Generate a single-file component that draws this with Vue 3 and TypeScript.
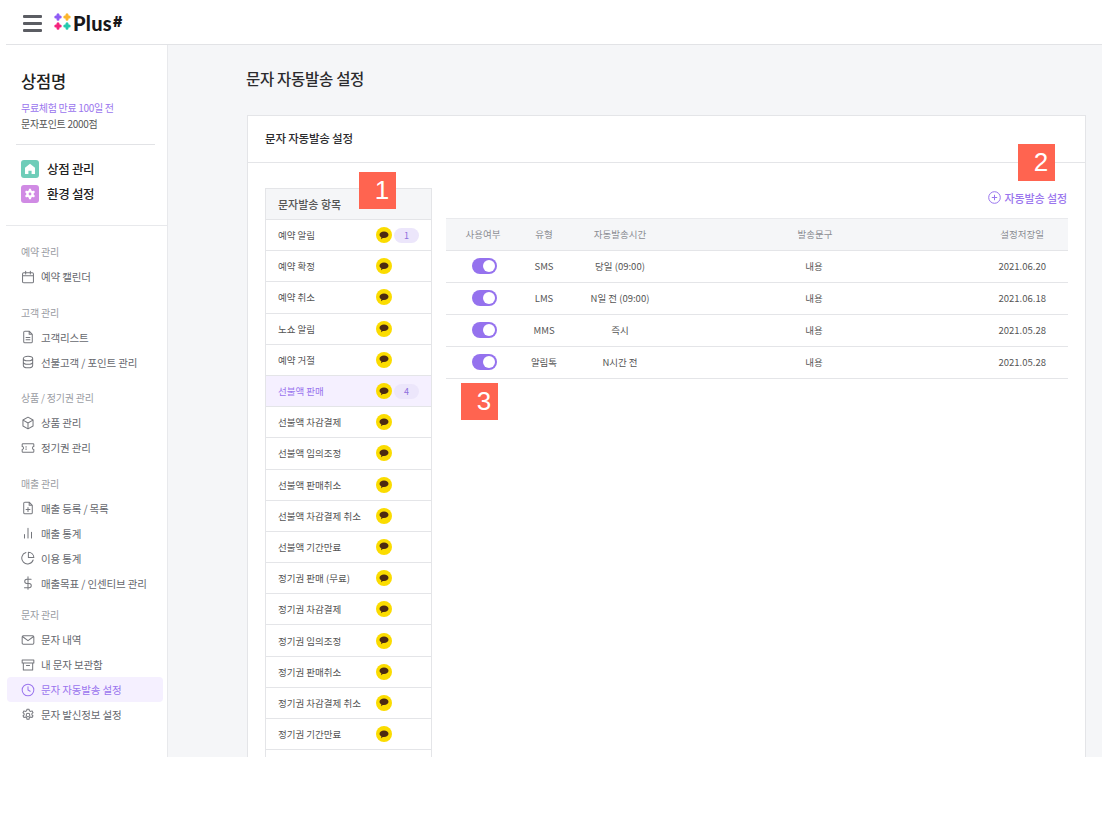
<script setup lang="ts">
interface NavItem { label: string; icon: string; active?: boolean }
interface NavGroup { title: string; items: NavItem[] }

const groups: NavGroup[] = [
  { title: '예약 관리', items: [{ label: '예약 캘린더', icon: 'calendar' }] },
  { title: '고객 관리', items: [{ label: '고객리스트', icon: 'file' }, { label: '선불고객 / 포인트 관리', icon: 'db' }] },
  { title: '상품 / 정기권 관리', items: [{ label: '상품 관리', icon: 'box' }, { label: '정기권 관리', icon: 'ticket' }] },
  { title: '매출 관리', items: [{ label: '매출 등록 / 목록', icon: 'fileplus' }, { label: '매출 통계', icon: 'bars' }, { label: '이용 통계', icon: 'pie' }, { label: '매출목표 / 인센티브 관리', icon: 'dollar' }] },
  { title: '문자 관리', items: [{ label: '문자 내역', icon: 'mail' }, { label: '내 문자 보관함', icon: 'archive' }, { label: '문자 자동발송 설정', icon: 'clock', active: true }, { label: '문자 발신정보 설정', icon: 'gear' }] },
]

const iconPaths: Record<string, string> = {
  calendar: 'M3.5 3.5h11a1.5 1.5 0 0 1 1.5 1.5v10a1.5 1.5 0 0 1-1.5 1.5h-11A1.5 1.5 0 0 1 2 15V5a1.5 1.5 0 0 1 1.5-1.5zM6 1.5v3.5M12 1.5v3.5M2 7.5h14',
  file: 'M10.5 1.5H5A1.5 1.5 0 0 0 3.5 3v12A1.5 1.5 0 0 0 5 16.5h8a1.5 1.5 0 0 0 1.5-1.5V5.5zM10.5 1.5v4h4M6.5 9.5h5M6.5 12.5h5',
  db: 'M3 4.5c0-1.6 2.7-3 6-3s6 1.4 6 3-2.7 3-6 3-6-1.4-6-3zM3 4.5v9c0 1.6 2.7 3 6 3s6-1.4 6-3v-9M3 9c0 1.6 2.7 3 6 3s6-1.4 6-3',
  box: 'M9 1.5l6.5 3.7v7.6L9 16.5l-6.5-3.7V5.2zM2.7 5.3L9 9l6.3-3.7M9 9v7.4',
  ticket: 'M2.5 3.5h13a1 1 0 0 1 1 1v2.7a1.8 1.8 0 0 0 0 3.6v2.7a1 1 0 0 1-1 1h-13a1 1 0 0 1-1-1v-2.7a1.8 1.8 0 0 0 0-3.6V4.5a1 1 0 0 1 1-1zM6.5 7v1M6.5 10v1',
  fileplus: 'M10.5 1.5H5A1.5 1.5 0 0 0 3.5 3v12A1.5 1.5 0 0 0 5 16.5h8a1.5 1.5 0 0 0 1.5-1.5V5.5zM10.5 1.5v4h4M9 8.5v5M6.5 11h5',
  bars: 'M4.5 15.5V11M9 15.5V3M13.5 15.5V8',
  pie: 'M15.6 11.6A7.5 7.5 0 1 1 6.4 2M9.5 1.5a7 7 0 0 1 7 7h-7z',
  dollar: 'M9 1v16M13 4.2H7.5a2.7 2.7 0 0 0 0 5.4h3a2.7 2.7 0 0 1 0 5.4H4.5',
  mail: 'M3 3.5h12A1.5 1.5 0 0 1 16.5 5v8a1.5 1.5 0 0 1-1.5 1.5H3A1.5 1.5 0 0 1 1.5 13V5A1.5 1.5 0 0 1 3 3.5zM1.8 4.5L9 9.8l7.2-5.3',
  archive: 'M1.5 2.5h15v4h-15zM3 6.5v9h12v-9M7 9.5h4',
  clock: 'M9 1.5a7.5 7.5 0 1 1 0 15 7.5 7.5 0 0 1 0-15zM9 4.8V9l2.8 1.6',
  gear: 'M9 6.7a2.3 2.3 0 1 1 0 4.6 2.3 2.3 0 0 1 0-4.6zM7.7 1.5h2.6l.4 2 1.6.9 1.9-.7 1.3 2.3-1.5 1.3v1.4l1.5 1.3-1.3 2.3-1.9-.7-1.6.9-.4 2H7.7l-.4-2-1.6-.9-1.9.7-1.3-2.3 1.5-1.3V7.3L2.5 6l1.3-2.3 1.9.7 1.6-.9z',
}

const categories: { label: string; count?: number; active?: boolean }[] = [
  { label: '예약 알림', count: 1 },
  { label: '예약 확정' },
  { label: '예약 취소' },
  { label: '노쇼 알림' },
  { label: '예약 거절' },
  { label: '선불액 판매', count: 4, active: true },
  { label: '선불액 차감결제' },
  { label: '선불액 임의조정' },
  { label: '선불액 판매취소' },
  { label: '선불액 차감결제 취소' },
  { label: '선불액 기간만료' },
  { label: '정기권 판매 (무료)' },
  { label: '정기권 차감결제' },
  { label: '정기권 임의조정' },
  { label: '정기권 판매취소' },
  { label: '정기권 차감결제 취소' },
  { label: '정기권 기간만료' },
  { label: '' },
]

const rows = [
  { type: 'SMS', time: '당일 (09:00)', text: '내용', date: '2021.06.20' },
  { type: 'LMS', time: 'N일 전 (09:00)', text: '내용', date: '2021.06.18' },
  { type: 'MMS', time: '즉시', text: '내용', date: '2021.05.28' },
  { type: '알림톡', time: 'N시간 전', text: '내용', date: '2021.05.28' },
]
</script>

<template>
  <div class="page">
    <header class="topbar">
      <div class="burger"><span></span><span></span><span></span></div>
      <div class="logo">
        <svg width="17" height="18" viewBox="0 0 17 18">
          <g fill="none" stroke-width="3" stroke-linecap="round">
            <path d="M4 1.8v4.4M1.8 4h4.4" stroke="#8f5cf5" />
            <path d="M13 1.8v4.4M10.8 4h4.4" stroke="#fbb62d" />
            <path d="M4 10.8v4.4M1.8 13h4.4" stroke="#f5247e" />
            <path d="M13 10.8v4.4M10.8 13h4.4" stroke="#27c9ae" />
          </g>
        </svg>
        <span class="logo-text">Plus<span class="logo-hash">#</span></span>
      </div>
    </header>

    <div class="body">
      <aside class="sidebar">
        <div class="store">
          <h2 class="store-name">상점명</h2>
          <p class="trial">무료체험 만료 100일 전</p>
          <p class="points">문자포인트 2000점</p>
          <div class="store-links">
            <div class="store-link">
              <span class="tile tile-green">
                <svg width="12" height="12" viewBox="0 0 12 12"><path d="M6 .8L11 4.8V11H7.6V7.8H4.4V11H1V4.8z" fill="#fff" /></svg>
              </span>
              상점 관리
            </div>
            <div class="store-link">
              <span class="tile tile-purple">
                <svg width="12" height="12" viewBox="0 0 12 12"><circle cx="6" cy="6" r="3.8" fill="#fff" /><path d="M6 .8v10.4M1.5 3.4l9 5.2M1.5 8.6l9-5.2" stroke="#fff" stroke-width="2.2" /><circle cx="6" cy="6" r="1.4" fill="#d08be4" /></svg>
              </span>
              환경 설정
            </div>
          </div>
        </div>
        <nav class="nav">
          <section v-for="g in groups" :key="g.title" class="group">
            <div class="group-title">{{ g.title }}</div>
            <div v-for="it in g.items" :key="it.label" class="nav-item" :class="{ active: it.active }">
              <svg class="nav-icon" width="14" height="14" viewBox="0 0 18 18"><path :d="iconPaths[it.icon]" fill="none" stroke="currentColor" stroke-width="1.3" stroke-linecap="round" stroke-linejoin="round" /></svg>
              <span>{{ it.label }}</span>
            </div>
          </section>
        </nav>
      </aside>

      <main class="main">
        <h1 class="page-title">문자 자동발송 설정</h1>
        <div class="card">
          <div class="card-head">문자 자동발송 설정</div>
          <div class="card-body">
            <div class="cat-list">
              <div class="cat-head">문자발송 항목</div>
              <div v-for="(c, i) in categories" :key="i" class="cat-row" :class="{ active: c.active }">
                <span class="cat-label">{{ c.label }}</span>
                <span v-if="c.label" class="kakao">
                  <svg width="10" height="9" viewBox="0 0 10 9"><path d="M5 .6c2.5 0 4.500 1.400 4.500 3.200S7.500 7 5 7c-.4 0-.8 0-1.200-.1L2 8.300l.4-1.900C1.200 5.800.5 4.900.5 3.800.5 2 2.500.6 5 .6z" fill="#4b2a12" /></svg>
                </span>
                <span v-if="c.count" class="count">{{ c.count }}</span>
              </div>
            </div>

            <div class="right">
              <div class="add"><svg width="13" height="13" viewBox="0 0 13 13"><circle cx="6.5" cy="6.5" r="5.8" fill="none" stroke="currentColor" stroke-width="1" /><path d="M6.5 3.800v5.400M3.800 6.500h5.400" stroke="currentColor" stroke-width="1" /></svg>자동발송 설정</div>
              <table class="tbl">
                <colgroup>
                  <col class="c1" /><col class="c2" /><col class="c3" /><col class="c4" /><col class="c5" />
                </colgroup>
                <thead>
                  <tr><th>사용여부</th><th>유형</th><th>자동발송시간</th><th>발송문구</th><th class="date">설정저장일</th></tr>
                </thead>
                <tbody>
                  <tr v-for="(r, i) in rows" :key="i">
                    <td><span class="toggle"><span class="knob"></span></span></td>
                    <td>{{ r.type }}</td>
                    <td>{{ r.time }}</td>
                    <td class="msg">{{ r.text }}</td>
                    <td class="date">{{ r.date }}</td>
                  </tr>
                </tbody>
              </table>
            </div>
          </div>
        </div>
      </main>
    </div>

    <div class="mark m1">1</div>
    <div class="mark m2">2</div>
    <div class="mark m3">3</div>
  </div>
</template>

<style>
html, body { margin: 0; background: #fff; }
</style>

<style scoped>
* { box-sizing: border-box; }
.page {
  position: relative;
  width: 1102px;
  height: 757px;
  overflow: hidden;
  background: #fff;
  font-family: "Noto Sans CJK KR", "Noto Sans", sans-serif;
  color: #333;
}
.topbar {
  height: 45px;
  margin-left: 6px;
  padding-left: 17px;
  display: flex;
  align-items: center;
  gap: 12px;
  border-bottom: 1px solid #e2e3e6;
}
.burger { width: 19px; display: flex; flex-direction: column; gap: 4px; margin-top: 2px; }
.burger span { display: block; height: 3px; border-radius: 1px; background: #5b5d63; }
.logo { display: flex; align-items: center; gap: 2px; }
.logo-text { font-family: Lato, sans-serif; font-weight: 900; font-size: 20px; line-height: 20px; color: #17171a; letter-spacing: .3px; }
.logo-hash { font-family: Inter, sans-serif; font-weight: 900; font-size: 14px; vertical-align: 4px; margin-left: 1px; }

.body { display: flex; height: 712px; }
.sidebar { width: 162px; margin-left: 6px; border-right: 1px solid #e8e9ec; flex: none; }
.store { height: 181px; border-bottom: 1px solid #e8e9ec; padding: 24px 13px 0 15px; margin-right: -1px; }
.store-name { margin: 0; font-size: 16.5px; line-height: 24px; font-weight: 500; color: #222; letter-spacing: -.2px; }
.trial { margin: 7px 0 0; font-size: 10px; line-height: 16px; color: #9a75ee; letter-spacing: -.3px; }
.points { margin: 0; font-size: 10px; line-height: 16px; color: #555; letter-spacing: -.3px; }
.store-links { margin: 12px 0 0 -5px; border-top: 1px solid #e2e3e6; padding: 15px 0 0 5px; display: flex; flex-direction: column; gap: 7px; }
.store-link { display: flex; align-items: center; gap: 8px; font-size: 12.5px; line-height: 18px; font-weight: 500; color: #222; letter-spacing: -.3px; }
.tile { width: 18px; height: 18px; border-radius: 3px; display: flex; align-items: center; justify-content: center; }
.tile-green { background: #6fcdb9; }
.tile-purple { background: #d08be4; }

.nav { padding: 14px 0 0 1px; }
.group { margin-bottom: 11.5px; }
.group:nth-last-child(2) { margin-bottom: 7.5px; }
.group-title { height: 24px; line-height: 24px; padding-left: 14px; font-size: 10px; color: #9a9ca3; letter-spacing: -.2px; }
.nav-item { height: 25px; display: flex; align-items: center; gap: 6px; padding-left: 14px; margin-right: 4px; font-size: 10.5px; color: #66686e; letter-spacing: -.15px; border-radius: 4px; }
.nav-item.active { background: #f5f0ff; color: #9a75ee; }
.nav-icon { flex: none; color: #75777d; }
.active .nav-icon { color: #9a75ee; }

.main { flex: 1; background: #f5f6f8; padding: 0 16px 0 78px; min-width: 0; }
.page-title { margin: 0; height: 70px; padding-top: 21px; font-size: 15.5px; line-height: 24px; font-weight: 500; color: #2b2b2e; letter-spacing: -.3px; }
.card { background: #fff; border: 1px solid #e4e5e8; height: 660px; margin-left: 1px; }
.card-head { height: 47px; line-height: 44px; padding-left: 17px; font-size: 11.5px; font-weight: 500; color: #2b2b2e; border-bottom: 1px solid #e4e5e8; letter-spacing: -.2px; }
.card-body { display: flex; padding: 25px 18px 0 17px; gap: 14px; }

.cat-list { width: 167px; flex: none; border: 1px solid #e4e5e8; border-bottom: 0; }
.cat-head { height: 31px; line-height: 31px; padding-left: 12px; font-size: 11px; font-weight: 500; color: #555; background: #f5f6f8; border-bottom: 1px solid #e4e5e8; }
.cat-row { height: 31.2px; display: flex; align-items: center; padding-left: 12px; border-bottom: 1px solid #e4e5e8; font-size: 9.5px; color: #555; }
.cat-row.active { background: #f5f0ff; color: #9a75ee; }
.cat-label { width: 98px; flex: none; white-space: nowrap; }
.kakao { width: 16px; height: 16px; border-radius: 50%; background: #fbdc00; display: flex; align-items: center; justify-content: center; flex: none; }
.count { margin-left: 2px; width: 25px; height: 15px; line-height: 15px; border-radius: 8px; text-align: center; background: #ece6fb; font-size: 9px; color: #8f70dd; }

.right { flex: 1; min-width: 0; }
.add { height: 35px; margin-top: -5px; padding-bottom: 6px; display: flex; align-items: center; justify-content: flex-end; gap: 4px; font-size: 11px; font-weight: 500; color: #9a75ee; letter-spacing: -.1px; }
.tbl { width: 100%; border-collapse: collapse; table-layout: fixed; }
.c1 { width: 74px; } .c2 { width: 48px; } .c3 { width: 104px; } .c4 { width: 286px; } .c5 { width: 110px; }
th { height: 32px; background: #f5f6f8; border-top: 1px solid #e9eaed; border-bottom: 1px solid #e4e5e8; font-size: 9.5px; font-weight: 400; color: #8b8d93; text-align: center; padding: 0 0 1px; }
td { height: 32px; border-bottom: 1px solid #e4e5e8; font-size: 9.5px; color: #555; text-align: center; padding: 0 0 2px; }
td:first-child { padding: 0; }
td.msg { padding-right: 2px; }
td.date { text-align: right; padding-right: 22px; }
th.date { text-align: right; padding-right: 24px; }
.toggle { display: block; width: 25px; height: 16px; margin: 0 0 1px 26px; padding: 2px; border-radius: 8px; background: #9572ee; }
.knob { display: block; width: 12px; height: 12px; margin-left: 9px; border-radius: 50%; background: #fff; }

.mark { position: absolute; width: 37px; height: 37px; padding-left: 9px; background: #ff6450; color: #fff; font-family: "Liberation Sans", sans-serif; font-size: 26px; line-height: 37px; text-align: center; }
.m1 { left: 359px; top: 172px; }
.m2 { left: 1018px; top: 144px; }
.m3 { left: 461px; top: 383px; }
</style>
